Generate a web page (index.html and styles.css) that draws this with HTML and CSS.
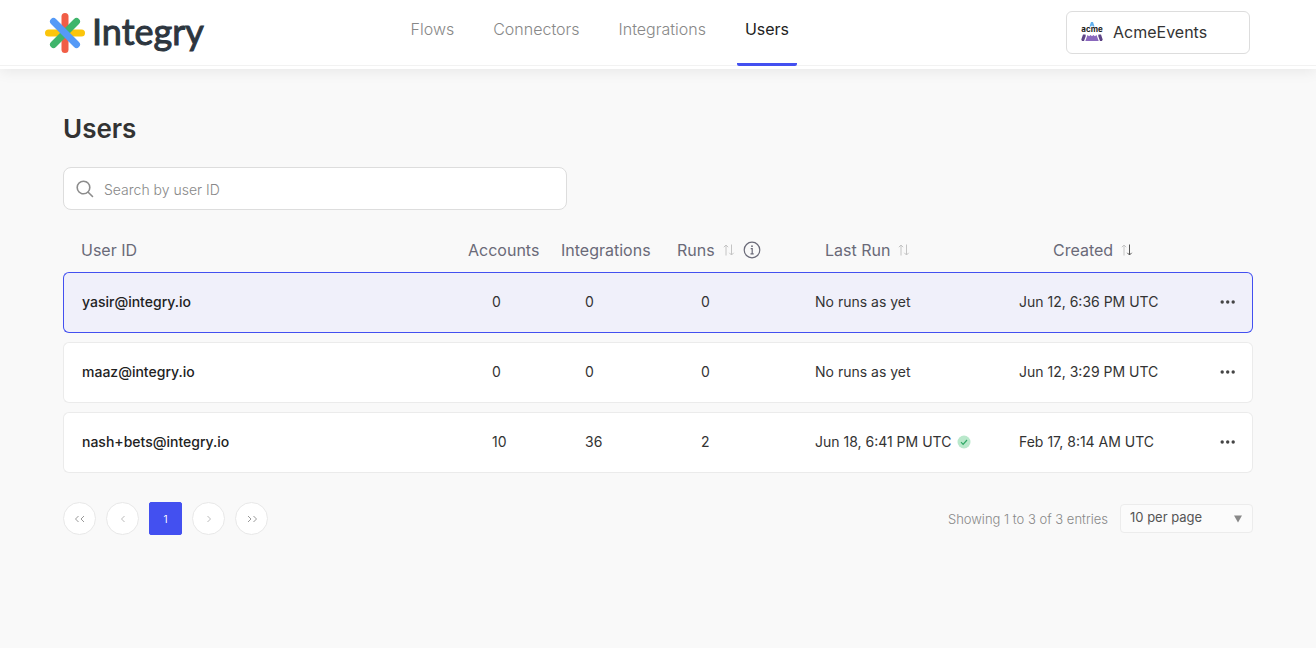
FILE: index.html
```html
<!DOCTYPE html>
<html lang="en">
<head>
<meta charset="utf-8">
<meta name="viewport" content="width=device-width, initial-scale=1">
<title>Users - Integry</title>
<link rel="stylesheet" href="styles.css">
</head>
<body>
<svg class="sprite" aria-hidden="true">
  <symbol id="sort" viewBox="0 0 12 12">
    <path class="sort-up" d="M3 11.500V1M.8 3.200 3 1l2.200 2.200"/>
    <path class="sort-down" d="M8.500.5V11M6.300 8.800 8.500 11l2.200-2.200"/>
  </symbol>
  <symbol id="dots" viewBox="0 0 16 4">
    <circle cx="2.200" cy="2" r="1.700"/><circle cx="7.700" cy="2" r="1.700"/><circle cx="13.200" cy="2" r="1.700"/>
  </symbol>
</svg>

<header class="topbar">
  <a class="brand" href="#">
    <svg class="brand-mark" viewBox="0 0 40 40" aria-hidden="true">
      <path stroke="#fbc50b" d="M3.500 20h33"/>
      <path stroke="#f15d46" d="M20 3.500v33"/>
      <path stroke="#3fb56b" d="M8.500 31.500l23-23"/>
      <path stroke="#559af7" d="M8.500 8.500l23 23"/>
    </svg>
    <span class="brand-name">Integry</span>
  </a>
  <nav class="tabs">
    <a class="tab" href="#">Flows</a>
    <a class="tab" href="#">Connectors</a>
    <a class="tab" href="#">Integrations</a>
    <a class="tab tab-active" href="#" aria-current="page">Users</a>
  </nav>
  <button class="account" type="button">
    <svg class="account-logo" viewBox="0 0 22 20" aria-hidden="true">
      <path fill="#62b0ee" d="M10 0h2l1.500 4.500h-1.700L11 3.300l-.8 1.200H8.500z"/>
      <text x="11" y="10" text-anchor="middle">acme</text>
      <path fill="#5d4486" d="M2 12.500h2.500L4.800 14 3 19H1L.3 17.500zM17.500 12.500H20l1.700 5L21 19h-2l-1.800-5z"/>
      <path fill="#8a68bd" d="M6.500 13l1.600 1.200L9.600 13l1.400 1.200 1.400-1.200 1.500 1.200 1.600-1.200 2.200 6H4.300z"/>
    </svg>
    <span>AcmeEvents</span>
  </button>
</header>

<main class="page">
  <h1 class="title">Users</h1>

  <label class="search">
    <svg class="search-icon" viewBox="0 0 18 18" aria-hidden="true"><circle cx="7.500" cy="7.500" r="6.300"/><path d="M12.200 12.200l4.300 4.300"/></svg>
    <input class="search-input" type="text" placeholder="Search by user ID" aria-label="Search by user ID">
  </label>

  <table class="users">
    <colgroup>
      <col><col class="col-accounts"><col class="col-integrations"><col class="col-runs"><col class="col-last"><col class="col-created"><col class="col-actions">
    </colgroup>
    <thead>
      <tr>
        <th class="id" scope="col">User ID</th>
        <th scope="col">Accounts</th>
        <th scope="col">Integrations</th>
        <th scope="col"><span class="heading">Runs
          <button class="icon-button" type="button" aria-label="Sort by runs"><svg class="sort"><use href="#sort"/></svg></button>
          <svg class="info" viewBox="0 0 18 18" role="img" aria-label="About runs"><circle cx="9" cy="9" r="7.800"/><path d="M7.700 7.700h1.500v5M7.500 12.900h3.200"/><circle class="info-dot" cx="9" cy="5.200" r=".9"/></svg></span></th>
        <th class="last" scope="col"><span class="heading">Last Run
          <button class="icon-button" type="button" aria-label="Sort by last run"><svg class="sort"><use href="#sort"/></svg></button></span></th>
        <th class="created" scope="col"><span class="heading">Created
          <button class="icon-button" type="button" aria-label="Sort by created"><svg class="sort sort-desc"><use href="#sort"/></svg></button></span></th>
        <td></td>
      </tr>
    </thead>
    <tbody>
      <tr class="selected">
        <td class="id">yasir@integry.io</td>
        <td class="count">0</td><td class="count">0</td><td class="count">0</td>
        <td>No runs as yet</td>
        <td>Jun 12, 6:36 PM UTC</td>
        <td class="actions"><button class="icon-button" type="button" aria-label="More actions"><svg class="dots"><use href="#dots"/></svg></button></td>
      </tr>
      <tr>
        <td class="id">maaz@integry.io</td>
        <td class="count">0</td><td class="count">0</td><td class="count">0</td>
        <td>No runs as yet</td>
        <td>Jun 12, 3:29 PM UTC</td>
        <td class="actions"><button class="icon-button" type="button" aria-label="More actions"><svg class="dots"><use href="#dots"/></svg></button></td>
      </tr>
      <tr>
        <td class="id">nash+bets@integry.io</td>
        <td class="count">10</td><td class="count">36</td><td class="count">2</td>
        <td><span class="run">Jun 18, 6:41 PM UTC
          <svg class="success" viewBox="0 0 14 14" role="img" aria-label="Succeeded"><circle cx="7" cy="7" r="6.500"/><path d="M4 7.200l2.100 2.100 3.900-4.300"/></svg></span></td>
        <td>Feb 17, 8:14 AM UTC</td>
        <td class="actions"><button class="icon-button" type="button" aria-label="More actions"><svg class="dots"><use href="#dots"/></svg></button></td>
      </tr>
    </tbody>
  </table>

  <footer class="footer">
    <nav class="pager" aria-label="Pagination">
      <button class="page-button" type="button" aria-label="First page"><svg viewBox="0 0 12 8"><path d="M4.500 1l-3 3 3 3M10 1L7 4l3 3"/></svg></button>
      <button class="page-button page-faint" type="button" aria-label="Previous page"><svg viewBox="0 0 12 8"><path d="M7.500 1l-3 3 3 3"/></svg></button>
      <button class="page-button page-current" type="button" aria-current="page">1</button>
      <button class="page-button page-faint" type="button" aria-label="Next page"><svg viewBox="0 0 12 8"><path d="M4.500 1l3 3-3 3"/></svg></button>
      <button class="page-button" type="button" aria-label="Last page"><svg viewBox="0 0 12 8"><path d="M2 1l3 3-3 3M7.500 1l3 3-3 3"/></svg></button>
    </nav>
    <div class="summary">
      <span>Showing 1 to 3 of 3 entries</span>
      <div class="per-page">
        <select class="per-page-select" aria-label="Entries per page">
          <option>10 per page</option>
          <option>25 per page</option>
          <option>50 per page</option>
        </select>
        <svg class="per-page-arrow" viewBox="0 0 8 8" aria-hidden="true"><path d="M0 .5h8L4 7.500z"/></svg>
      </div>
    </div>
  </footer>
</main>
</body>
</html>
```
FILE: styles.css
```css
* {
  box-sizing: border-box;
}

body {
  margin: 0;
  min-height: 100vh;
  background: #f9f9f9;
  color: #333;
  font-family: Inter, "Liberation Sans", sans-serif;
  font-size: 14px;
}

button,
input,
select {
  font: inherit;
  color: inherit;
}

.sprite {
  display: none;
}

/* Top bar */

.topbar {
  display: grid;
  grid-template-columns: 15fr auto 19fr;
  height: 69px;
  padding: 0 66px 0 45px;
  background: linear-gradient(#f2f2f2, #f2f2f2) 0 65px / 100% 1px no-repeat #fff;
  box-shadow: 0 2px 14px rgba(0, 0, 0, 0.08);
}

.brand {
  display: flex;
  align-items: center;
  gap: 7px;
  height: 66px;
  color: #2d363f;
  text-decoration: none;
}

.brand-mark {
  width: 40px;
  height: 40px;
  fill: none;
  stroke-width: 7;
  stroke-linecap: round;
}

.brand-name {
  padding-bottom: 4px;
  font-family: Lato, sans-serif;
  font-size: 36px;
  line-height: 40px;
  -webkit-text-stroke: 1px #2d363f;
}

.tabs {
  display: flex;
  gap: 23px;
  height: 66px;
}

.tab {
  padding: 18px 8px 0;
  border-bottom: 3px solid transparent;
  border-radius: 2px;
  color: #888;
  font-size: 16px;
  font-weight: 300;
  line-height: 22px;
  text-decoration: none;
}

.tab-active {
  border-bottom-color: #4350f0;
  color: #222;
  font-weight: 400;
}

.account {
  display: flex;
  align-items: center;
  justify-self: end;
  gap: 10px;
  width: 184px;
  height: 43px;
  margin-top: 11px;
  padding: 0 13px 2px 14px;
  border: 1px solid #ddd;
  border-radius: 6px;
  background: #fff;
  font-size: 16px;
}

.account-logo {
  width: 22px;
  height: 20px;
}

.account-logo text {
  font-size: 8px;
  font-weight: 700;
  fill: #222;
}

/* Page */

.page {
  padding: 44px 63px 40px;
}

.title {
  margin: 0;
  font-size: 26px;
  font-weight: 600;
  line-height: 32px;
}

.search {
  display: flex;
  align-items: center;
  gap: 10px;
  width: 504px;
  max-width: 100%;
  height: 43px;
  margin-top: 22px;
  padding: 0 12px;
  border: 1px solid #ddd;
  border-radius: 8px;
  background: #fff;
}

.search-icon {
  flex: none;
  width: 18px;
  height: 18px;
  fill: none;
  stroke: #8c8c8c;
  stroke-width: 1.6;
  stroke-linecap: round;
}

.search-input {
  flex: 1;
  min-width: 0;
  padding: 2px 0 0;
  border: 0;
  outline: 0;
  background: none;
  font-weight: 300;
}

.search-input::placeholder {
  color: #888;
  opacity: 1;
}

/* Users table */

.users {
  width: 100%;
  margin-top: 18px;
  border-collapse: separate;
  border-spacing: 0 9px;
  table-layout: fixed;
}

.col-accounts { width: 93px; }
.col-integrations { width: 116px; }
.col-runs { width: 138px; }
.col-last { width: 204px; }
.col-created { width: 181px; }
.col-actions { width: 53px; }

.users th,
.users td {
  padding: 0;
  text-align: left;
  white-space: nowrap;
}

.users th {
  height: 26px;
  color: #6a6a78;
  font-size: 16px;
  font-weight: 400;
}

.users .id {
  padding-left: 18px;
}

.users th.last {
  padding-left: 10px;
}

.users th.created {
  padding-left: 34px;
}

.heading {
  display: flex;
  align-items: center;
  gap: 8px;
}

.icon-button {
  display: flex;
  padding: 0;
  border: 0;
  background: none;
}

.sort {
  width: 12px;
  height: 12px;
  fill: none;
  stroke: #c4c4c4;
}

.sort-desc {
  --down: #555;
}

.sort-down {
  stroke: var(--down, #c4c4c4);
}

.info {
  width: 18px;
  height: 18px;
  fill: none;
  stroke: #6a6a78;
  stroke-width: 1.2;
}

.info-dot {
  fill: #6a6a78;
  stroke: none;
}

.users tbody td {
  height: 61px;
  padding-bottom: 2px;
  border: solid #ebebeb;
  border-width: 1px 0;
  background: #fff;
}

.users tbody td:first-child {
  border-left-width: 1px;
  border-radius: 6px 0 0 6px;
}

.users tbody td:last-child {
  border-right-width: 1px;
  border-radius: 0 6px 6px 0;
}

.users tbody .id {
  color: #222;
  font-weight: 500;
}

.users .selected td {
  border-color: #4350f0;
  background: #f0f0fa;
}

.users .count {
  padding-left: 24px;
}

.run {
  display: flex;
  align-items: center;
  gap: 6px;
}

.success {
  width: 14px;
  height: 14px;
  fill: #b9e8cb;
}

.success path {
  fill: none;
  stroke: #2fa866;
  stroke-width: 1.2;
}

.users .actions {
  padding-left: 20px;
}

.dots {
  width: 16px;
  height: 4px;
  fill: #444;
}

/* Footer */

.footer {
  display: flex;
  align-items: center;
  justify-content: space-between;
  margin-top: 20px;
}

.pager {
  display: flex;
  align-items: center;
  gap: 10px;
}

.page-button {
  display: flex;
  align-items: center;
  justify-content: center;
  width: 33px;
  height: 33px;
  padding: 0;
  border: 1px solid #e8e8e8;
  border-radius: 50%;
  background: #fff;
}

.page-button svg {
  width: 12px;
  height: 8px;
  fill: none;
  stroke: #999;
}

.page-faint svg {
  stroke: #bbb;
}

.page-current {
  border-color: #4350f0;
  border-radius: 2px;
  background: #4350f0;
  color: #fff;
  font-size: 10px;
}

.summary {
  display: flex;
  align-items: center;
  gap: 12px;
  color: #888;
  font-size: 13px;
  font-weight: 300;
}

.per-page {
  display: grid;
  align-items: center;
  width: 133px;
}

.per-page > * {
  grid-area: 1 / 1;
}

.per-page-select {
  height: 29px;
  padding: 0 24px 3px 9px;
  border: 1px solid #ececec;
  border-radius: 4px;
  appearance: none;
  background: #fbfbfb;
  color: #555;
  font-weight: 400;
}

.per-page-arrow {
  justify-self: end;
  width: 8px;
  height: 8px;
  margin-right: 11px;
  fill: #888;
  pointer-events: none;
}
```
